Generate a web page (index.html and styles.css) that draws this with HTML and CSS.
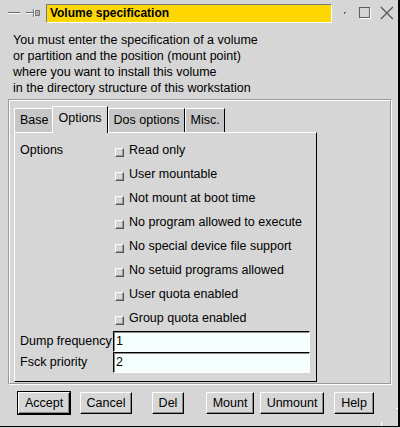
FILE: index.html
```html
<!DOCTYPE html>
<html>
<head>
<meta charset="utf-8">
<link rel="stylesheet" href="styles.css">
</head>
<body>
<div class="win">
  <div class="titlebar">
    <svg class="tb-left" width="32" height="26" viewBox="0 0 32 26">
      <rect x="0" y="12" width="12" height="1" fill="#6a6a6a"/>
      <rect x="0" y="13" width="12" height="1" fill="#ffffff"/>
      <rect x="18" y="12" width="7" height="1" fill="#6a6a6a"/>
      <rect x="18" y="13" width="7" height="1" fill="#ffffff"/>
      <rect x="25" y="9" width="1" height="8" fill="#6a6a6a"/>
      <rect x="26" y="9" width="1" height="8" fill="#ffffff"/>
      <path d="M27.5 10.5 L31.5 10.5 L31.5 15.5 L27.5 15.5 Z" fill="none" stroke="#6a6a6a" stroke-width="1"/>
      <path d="M28.5 11.5 L30.5 14.5 M30.5 11.5 L28.5 14.5" stroke="#8a8a8a" stroke-width="1"/>
    </svg>
    <div class="title">Volume specification</div>
    <svg class="tb-right" width="60" height="26" viewBox="0 0 60 26">
      <rect x="6" y="12" width="2" height="2" fill="#5a5a5a"/>
      <rect x="7" y="13" width="1" height="1" fill="#ffffff"/>
      <rect x="21.5" y="7.5" width="10" height="10" fill="none" stroke="#5a5a5a"/>
      <path d="M22.5 18.5 H32.5 V8.5" fill="none" stroke="#ffffff"/>
      <path d="M43 7 L55 19 M55 7 L43 19" stroke="#5a5a5a" stroke-width="1.3"/>
    </svg>
  </div>

  <div class="desc">You must enter the specification of a volume<br>or partition and the position (mount point)<br>where you want to install this volume<br>in the directory structure of this workstation</div>

  <div class="frame">
    <div class="frame-in">
      <div class="tabs">
        <div class="tab">Base</div>
        <div class="tab sel">Options</div>
        <div class="tab">Dos options</div>
        <div class="tab">Misc.</div>
      </div>
      <div class="panel">
        <div class="lbl">Options</div>
        <div class="checks">
          <div class="chk"><span class="box"></span>Read only</div>
          <div class="chk"><span class="box"></span>User mountable</div>
          <div class="chk"><span class="box"></span>Not mount at boot time</div>
          <div class="chk"><span class="box"></span>No program allowed to execute</div>
          <div class="chk"><span class="box"></span>No special device file support</div>
          <div class="chk"><span class="box"></span>No setuid programs allowed</div>
          <div class="chk"><span class="box"></span>User quota enabled</div>
          <div class="chk"><span class="box"></span>Group quota enabled</div>
        </div>
        <div class="lbl lbl-in">Dump frequency</div>
        <div class="inp">1</div>
        <div class="lbl lbl-in">Fsck priority</div>
        <div class="inp">2</div>
      </div>
    </div>
  </div>

  <div class="buttons">
    <div class="cell"><div class="btn def">Accept</div></div>
    <div class="cell"><div class="btn">Cancel</div></div>
    <div class="cell"><div class="btn">Del</div></div>
    <div class="cell"><div class="btn">Mount</div></div>
    <div class="cell"><div class="btn">Unmount</div></div>
    <div class="cell"><div class="btn">Help</div></div>
  </div>

  <span class="grip grip-b"></span>
  <span class="grip grip-r"></span>
</div>
</body>
</html>
```

FILE: styles.css
```css
html, body {
  margin: 0;
  padding: 0;
  background: #d6d6d6;
}

.win {
  position: relative;
  width: 400px;
  height: 427px;
  box-sizing: border-box;
  border-right: 2px solid #000;
  border-bottom: 1px solid #000;
  background: #d6d6d6;
  font-family: "Liberation Sans", Arial, sans-serif;
  font-size: 12.5px;
  color: #000;
  overflow: hidden;
}

/* title bar */
.titlebar {
  display: flex;
  align-items: flex-start;
  height: 26px;
  padding-left: 8px;
}
.tb-left { display: block; }
.tb-right { display: block; margin-left: 6px; }
.title {
  margin-left: 6px;
  margin-top: 4px;
  width: 287px;
  height: 19px;
  box-sizing: border-box;
  background: #ffd700;
  border: 1px solid;
  border-color: #7a7a7a #ffffff #ffffff #7a7a7a;
  padding-left: 3px;
  font-weight: bold;
  font-size: 12px;
  line-height: 17px;
}

/* description */
.desc {
  padding: 6px 0 0 13px;
  line-height: 16px;
  height: 64px;
  margin-bottom: 3px;
}

/* etched frame */
.frame {
  margin-left: 8px;
  width: 384px;
  height: 286px;
  box-sizing: border-box;
  border: 1px solid;
  border-color: #9a9a9a #ffffff #ffffff #9a9a9a;
}
.frame-in {
  height: 100%;
  box-sizing: border-box;
  border: 1px solid;
  border-color: #ffffff #9a9a9a #9a9a9a #ffffff;
  padding: 5px 0 0 4px;
}

/* tabs */
.tabs {
  display: flex;
  align-items: flex-end;
  height: 26px;
}
.tab {
  height: 24px;
  box-sizing: border-box;
  border-top: 1px solid #ffffff;
  border-left: 1px solid #ffffff;
  border-right: 1px solid #000;
  background: #c6c6c6;
  padding: 0 4px 0 5px;
  line-height: 23px;
}
.tab.sel {
  position: relative;
  z-index: 1;
  height: 27px;
  margin-bottom: -1px;
  margin-left: -2px;
  padding: 0 5px 0 6px;
  background: #d6d6d6;
  line-height: 22px;
}

/* panel */
.panel {
  width: 303px;
  height: 250px;
  box-sizing: border-box;
  border: 1px solid;
  border-color: #ffffff #000 #000 #ffffff;
  padding: 5px 0 0 5px;
  display: grid;
  grid-template-columns: 93px 197px;
  grid-template-rows: 193px 21px 21px;
}
.lbl {
  line-height: 24px;
  white-space: nowrap;
}
.lbl-in {
  line-height: 21px;
}
.checks {
  display: flex;
  flex-direction: column;
}
.chk {
  display: flex;
  align-items: center;
  height: 24px;
  white-space: nowrap;
}
.box {
  width: 9px;
  height: 9px;
  box-sizing: border-box;
  margin: 4px 5px 0 2px;
  border: 1px solid;
  border-color: #ffffff #555555 #555555 #ffffff;
  background: #d6d6d6;
  box-shadow: inset -1px -1px 0 #9a9a9a;
}
.inp {
  height: 21px;
  box-sizing: border-box;
  border: 1px solid;
  border-color: #000 #ffffff #ffffff #000;
  box-shadow: inset 1px 1px 0 #8a8a8a;
  background: #f5fffd;
  padding-left: 2px;
  line-height: 19px;
}

/* buttons */
.buttons {
  display: grid;
  grid-template-columns: repeat(6, 62px);
  margin: 7px 0 0 13px;
}
.cell {
  display: flex;
  justify-content: center;
}
.btn {
  height: 22px;
  box-sizing: border-box;
  border: 1px solid;
  border-color: #ffffff #000 #000 #ffffff;
  box-shadow: inset -1px -1px 0 #8a8a8a;
  padding: 0 6px;
  line-height: 20px;
  white-space: nowrap;
}
.btn.def {
  box-shadow: inset -1px -1px 0 #8a8a8a, 0 0 0 1px #000;
}

/* resize grip marks on the window frame */
.grip {
  position: absolute;
  background: #ffffff;
}
.grip-b {
  left: 381px;
  bottom: 0;
  width: 1px;
  height: 4px;
}
.grip-r {
  right: 0;
  top: 408px;
  width: 2px;
  height: 1px;
}
```
